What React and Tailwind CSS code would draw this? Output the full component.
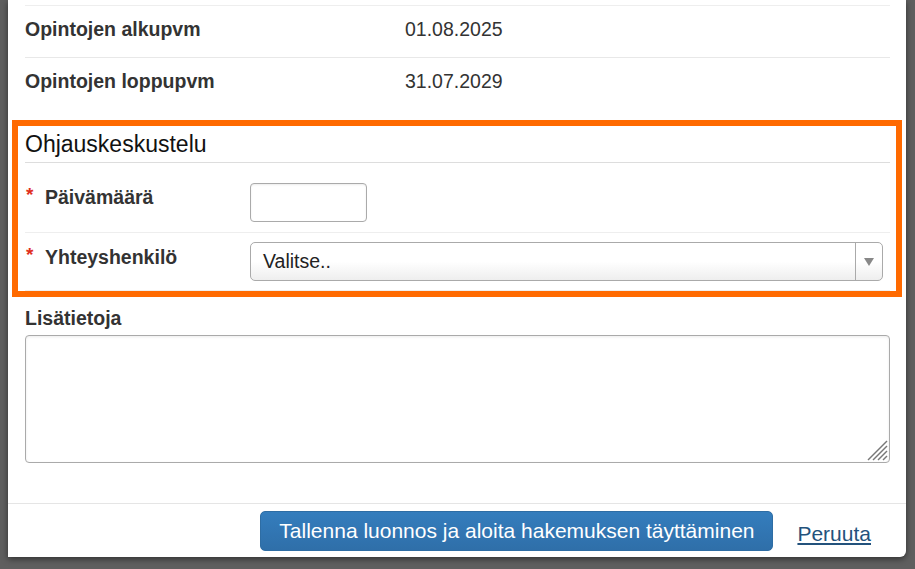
import React from 'react';

const font = { fontFamily: '"Liberation Sans", Arial, sans-serif' };

const InfoRow = ({ label, value, last }) => (
  <div className={`flex items-center h-[52px] pb-[4px] ${last ? '' : 'border-b border-[#e8e8e8]'}`}>
    <div className="w-[380px] text-[19.5px] font-bold text-[#333]">{label}</div>
    <div className="text-[19.5px] text-[#333]">{value}</div>
  </div>
);

const Required = () => <span className="text-[#e0301e] font-bold text-[19px] w-[19px] inline-block leading-none relative -top-[3px]">*</span>;

export default function App() {
  return (
    <div className="w-[915px] h-[569px] bg-[#5f5f5f] overflow-hidden" style={font}>
      <div className="ml-[8px] w-[898px] h-[557px] bg-white rounded-br-[6px] shadow-[0_2px_6px_rgba(0,0,0,0.5)] flex flex-col">
        {/* tiedot */}
        <div className="pl-[17px] pr-[16px] pt-[5px]">
          <div className="border-t border-[#eeeeee]">
            <InfoRow label="Opintojen alkupvm" value="01.08.2025" />
            <InfoRow label="Opintojen loppupvm" value="31.07.2029" last />
          </div>

          {/* korostettu osio */}
          <div className="mt-[10px] -ml-[13px] -mr-[12px] border-[6px] border-[#ff6a00] pl-[7px] pr-[6px]">
            <div className="h-[37px] flex items-center border-b border-[#dddddd] text-[23px] text-[#111]">
              Ohjauskeskustelu
            </div>
            <div className="h-[70px] flex items-start border-b border-[#eeeeee]">
              <div className="w-[225px] pt-[20px] pl-[1px] flex items-center text-[19.5px] font-bold text-[#333]">
                <Required />
                <span>Päivämäärä</span>
              </div>
              <div className="pt-[20px]">
                <input className="w-[117px] h-[39px] rounded-[4px] border border-[#aaaaaa] bg-white shadow-[inset_0_1px_2px_rgba(0,0,0,0.08)] outline-none" />
              </div>
            </div>
            <div className="h-[58px] flex items-start border-b border-[#eeeeee]">
              <div className="w-[225px] pt-[10px] pl-[1px] flex items-center text-[19.5px] font-bold text-[#333]">
                <Required />
                <span>Yhteyshenkilö</span>
              </div>
              <div className="pt-[9px] flex-1 pr-[1px]">
                <div className="flex h-[39px] w-[633px] rounded-[5px] border border-[#aaaaaa] bg-gradient-to-b from-white from-50% to-[#eeeeee] overflow-hidden">
                  <div className="flex-1 flex items-center pl-[12px] text-[19.5px] text-[#222]">Valitse..</div>
                  <div className="w-[27px] border-l border-[#aaaaaa] flex items-center justify-center">
                    <svg width="10" height="8" viewBox="0 0 10 8"><path d="M0 0h10L5 8z" fill="#888" /></svg>
                  </div>
                </div>
              </div>
            </div>
          </div>

          {/* lisätiedot */}
          <div className="pt-[9px]">
            <div className="text-[19.5px] font-bold text-[#333] leading-[24px]">Lisätietoja</div>
            <div className="relative mt-[5px]">
              <textarea className="block w-full h-[128px] rounded-[4px] border border-[#aaaaaa] resize-none outline-none shadow-[inset_0_1px_3px_rgba(0,0,0,0.08)]" />
              <svg className="absolute right-[2px] bottom-[2px]" width="22" height="22" viewBox="0 0 22 22">
                <g stroke="#777" strokeWidth="1.5">
                  <line x1="2" y1="21" x2="21" y2="2" />
                  <line x1="7" y1="21" x2="21" y2="7" />
                  <line x1="12" y1="21" x2="21" y2="12" />
                  <line x1="17" y1="21" x2="21" y2="17" />
                </g>
              </svg>
            </div>
          </div>
        </div>

        {/* alapalkki */}
        <div className="mt-auto border-t border-[#e5e5e5] h-[54px] flex items-start justify-end pt-[7px] pr-[35px]">
          <button className="h-[40px] w-[513px] rounded-[5px] border border-[#2e6da4] bg-gradient-to-b from-[#347dbd] to-[#2f6fa9] text-white text-[21px]">
            Tallenna luonnos ja aloita hakemuksen täyttäminen
          </button>
          <a className="ml-[24px] mt-[7px] text-[21px] text-[#23527c] underline" href="#">Peruuta</a>
        </div>
      </div>
    </div>
  );
}
